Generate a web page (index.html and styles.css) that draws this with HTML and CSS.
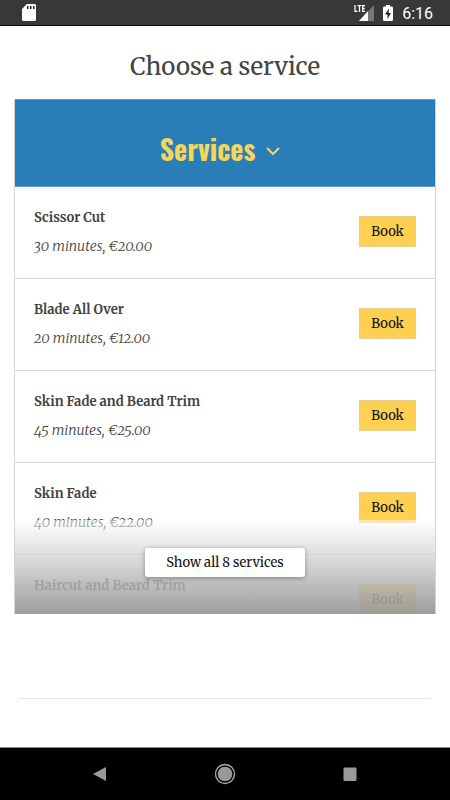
FILE: index.html
```html
<!DOCTYPE html>
<html lang="en">
<head>
<meta charset="utf-8">
<meta name="viewport" content="width=device-width, initial-scale=1">
<title>Choose a service</title>
<link rel="stylesheet" href="styles.css">
</head>
<body>
<header class="status">
  <svg class="sd" viewBox="0 0 14 17" width="14" height="17" aria-hidden="true"><path fill="#fff" d="M5 0h8l1 1v15l-1 1H1l-1-1V5z"/><path fill="#222" d="M5 2h1.500v3H5zM8 2h1.500v3H8zM11 2h1.500v3H11z"/></svg>
  <div class="status-right">
    <svg viewBox="0 0 20 16" width="20" height="16" aria-hidden="true"><path fill="#777" d="M20 0v16H5z"/><path fill="#fff" d="M14 6v10H5z"/><path fill="none" stroke="#fff" stroke-width="1.3" d="M1 0v6.400h2.500M3.500.7h4M5.500.7v6.300M11 .7H8.700v5.700H11M8.700 3.500h2"/></svg>
    <svg viewBox="0 0 10 16" width="10" height="16" aria-hidden="true"><path fill="#fff" d="M3 0h4v1.500h2l1 1V15l-1 1H1l-1-1V2.500l1-1h2z"/><path fill="#222" d="M6 3.500 2 9.500h2.500V14L8 8H5.500z"/></svg>
    <span class="clock">6:16</span>
  </div>
</header>
<main class="page">
  <h1 class="title">Choose a service</h1>
  <section class="card">
    <h2 class="card-head"><button class="toggle" type="button">Services
      <svg viewBox="0 0 14 9" width="14" height="9" aria-hidden="true"><path fill="none" stroke="#f5d55c" stroke-width="2" d="M1 1l6 6 6-6"/></svg></button></h2>
    <ul class="list">
      <li class="row"><div><h3 class="name">Scissor Cut</h3><p class="info">30 minutes, €20.00</p></div><button class="book" type="button">Book</button></li>
      <li class="row"><div><h3 class="name">Blade All Over</h3><p class="info">20 minutes, €12.00</p></div><button class="book" type="button">Book</button></li>
      <li class="row"><div><h3 class="name">Skin Fade and Beard Trim</h3><p class="info">45 minutes, €25.00</p></div><button class="book" type="button">Book</button></li>
      <li class="row"><div><h3 class="name">Skin Fade</h3><p class="info">40 minutes, €22.00</p></div><button class="book" type="button">Book</button></li>
      <li class="row row-cut"><div><h3 class="name">Haircut and Beard Trim</h3></div><button class="book" type="button">Book</button></li>
    </ul>
    <div class="fade"><button class="show-all" type="button">Show all 8 services</button></div>
  </section>
  <hr class="rule">
</main>
<nav class="nav">
  <button class="nav-btn" type="button" aria-label="Back"><svg viewBox="0 0 22 22" width="22" height="22"><path fill="#999" d="M17 4v14L4 11z"/></svg></button>
  <button class="nav-btn" type="button" aria-label="Home"><svg viewBox="0 0 22 22" width="22" height="22"><circle cx="11" cy="11" r="9.500" fill="none" stroke="#aaa" stroke-width="1.300"/><circle cx="11" cy="11" r="7.300" fill="#999"/></svg></button>
  <button class="nav-btn" type="button" aria-label="Recent apps"><svg viewBox="0 0 22 22" width="22" height="22"><rect x="4.500" y="4.500" width="13" height="13.500" rx="1" fill="#999"/></svg></button>
</nav>
</body>
</html>
```
FILE: styles.css
```css
* { box-sizing: border-box; }
body {
  margin: 0;
  min-height: 100vh;
  display: flex;
  flex-direction: column;
  background: #fff;
  color: #444;
  font-family: Merriweather, "Noto Serif", "Liberation Serif", serif;
}
h1, h2, h3, p, ul { margin: 0; padding: 0; font-weight: normal; }
button { font-family: inherit; margin: 0; padding: 0; }
svg { display: block; }
.status {
  height: 26px;
  padding: 0 17px 0 22px;
  display: flex;
  align-items: center;
  justify-content: space-between;
  background: #383838;
  border-bottom: 1px solid #111;
}
.status-right { display: flex; align-items: center; gap: 9px; }
.clock { color: #fff; font: 400 16px/20px Roboto, sans-serif; padding-top: 2px; }
.page { flex: 1; padding: 21px 14px 0; }
.title {
  font-size: 24px;
  line-height: 40px;
  text-align: center;
  margin-bottom: 12px;
}
.card { position: relative; border: 1px solid #d4d4d4; border-width: 0 1px; overflow: hidden; }
.card-head {
  height: 88px;
  margin: 0 -1px;
  padding: 12px 10px 0 0;
  display: flex;
  align-items: center;
  justify-content: center;
  background: #297eb8;
  border: 1px solid #5f9fca;
}
.toggle {
  display: flex;
  align-items: center;
  gap: 11px;
  border: 0;
  background: none;
  color: #f5d55c;
  font: bold 28px/40px Oswald, "Liberation Sans Narrow", sans-serif;
}
.toggle svg { margin-top: 4px; }
.list { list-style: none; }
.row {
  height: 92px;
  padding: 17px 19px 0;
  display: flex;
  justify-content: space-between;
  align-items: flex-start;
  border-bottom: 1px solid #d8d8d8;
}
.row-cut { height: 59px; border-bottom: 0; }
.name { font-size: 13px; line-height: 28px; font-weight: bold; }
.info {
  font-size: 14px;
  line-height: 28px;
  font-style: italic;
  font-weight: 300;
  font-variant-numeric: oldstyle-nums;
}
.book {
  width: 57px;
  height: 31px;
  margin-top: 12px;
  flex: none;
  border: 1px solid #e5cf8d;
  background: #ffd052;
  color: #111;
  font-size: 13px;
}
.fade {
  position: absolute;
  inset: auto 0 0;
  height: 94px;
  display: flex;
  justify-content: center;
  align-items: flex-start;
  padding-top: 28px;
  background: linear-gradient(rgba(255, 255, 255, 0.5), rgba(208, 208, 208, 0.75) 40%, rgba(152, 152, 152, 0.95));
}
.show-all {
  width: 160px;
  height: 29px;
  border: 0;
  border-radius: 3px;
  background: #fff;
  color: #111;
  font-size: 13px;
  box-shadow: 0 1px 5px rgba(0, 0, 0, 0.35);
}
.rule { margin: 84px 5px 0; border: 0; border-top: 1px solid #e8e8e8; }
.nav {
  height: 53px;
  padding: 0 38px;
  display: flex;
  align-items: center;
  background: #000;
  border-top: 1px solid #888;
}
.nav-btn { flex: 1; display: flex; justify-content: center; border: 0; background: none; }
```
